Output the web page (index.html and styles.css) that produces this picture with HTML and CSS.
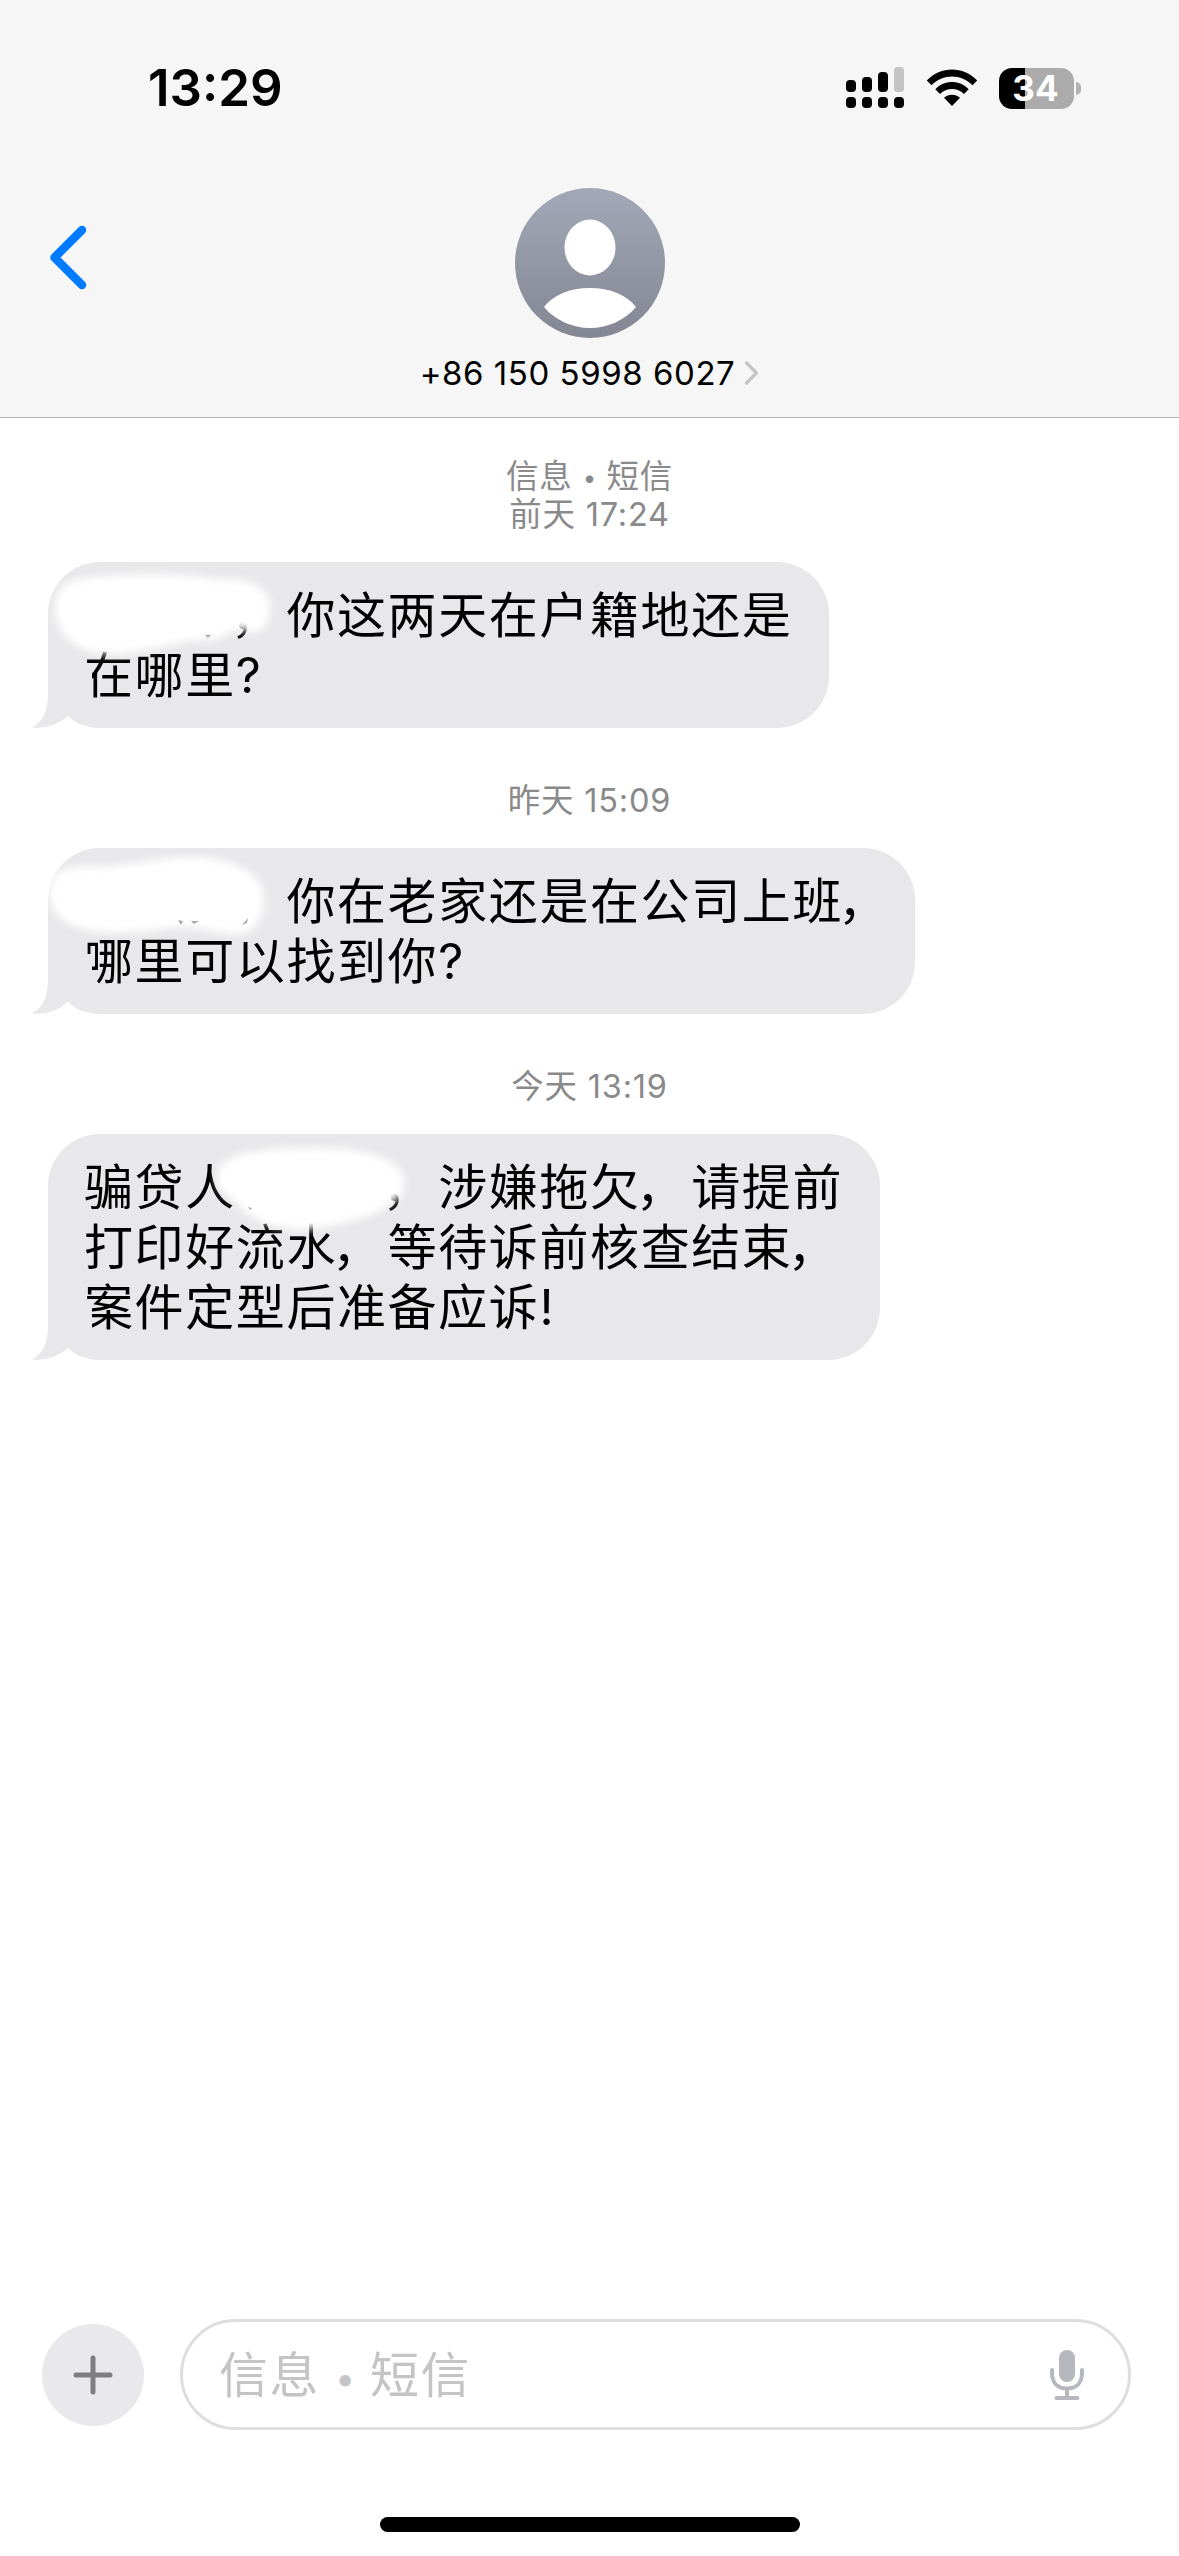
FILE: index.html
```html
<!DOCTYPE html>
<html lang="zh-CN">
<head>
<meta charset="utf-8">
<title>信息</title>
<link rel="stylesheet" href="styles.css">
</head>
<body>
<div class="phone">
  <header class="header">
    <div class="status">
      <span class="clock">13:29</span>
      <div class="indicators">
        <svg class="cellular" width="58" height="42" viewBox="0 0 58 42">
          <rect x="0" y="13" width="10" height="12" rx="4"/>
          <rect x="16" y="10" width="10" height="15" rx="4"/>
          <rect x="32" y="5" width="10" height="20" rx="4"/>
          <rect x="48" y="0" width="10" height="25" rx="3.5" fill="#c4c4c4"/>
          <rect x="0" y="30" width="10" height="11" rx="4"/>
          <rect x="16" y="30" width="10" height="11" rx="4"/>
          <rect x="32" y="30" width="10" height="11" rx="4"/>
          <rect x="48" y="30" width="10" height="11" rx="4"/>
        </svg>
        <svg class="wifi" width="52" height="38" viewBox="0 0 52 38">
          <path d="M0.8 11.5C14.5 -3.2 37.500 -3.200 51.200 11.500L46.500 16.200C35.400 4.600 16.600 4.600 5.500 16.200Z"/>
          <path d="M9.300 20.200C18.500 10.700 33.500 10.700 42.700 20.200L38 24.900C31.500 18.200 20.500 18.200 14 24.900Z"/>
          <path d="M18 28.800C22.400 24.800 29.600 24.800 34 28.800L26 37Z"/>
        </svg>
        <div class="battery">
          <span class="battery-body">34</span>
          <span class="battery-nub"></span>
        </div>
      </div>
    </div>
    <div class="contact-bar">
      <svg class="back" width="44" height="70" viewBox="0 0 44 70">
        <path d="M36 7L8.500 34.500L36 62" fill="none" stroke="#007aff" stroke-width="8.500" stroke-linecap="round" stroke-linejoin="round"/>
      </svg>
      <div class="contact">
        <svg class="avatar" width="150" height="150" viewBox="0 0 150 150">
          <defs>
            <linearGradient id="avatar-fill" x1="0" y1="0" x2="0" y2="1">
              <stop offset="0" stop-color="#a3a8b8"/>
              <stop offset="1" stop-color="#838793"/>
            </linearGradient>
          </defs>
          <circle cx="75" cy="75" r="75" fill="url(#avatar-fill)"/>
          <ellipse cx="75" cy="59.500" rx="25.500" ry="28" fill="#fff"/>
          <path d="M29 119C38 107 55 100 75 100S112 107 121 119C110 132 93 140 75 140S40 132 29 119Z" fill="#fff"/>
        </svg>
        <div class="number">
          <span>+86 150 5998 6027</span>
          <svg width="15" height="26" viewBox="0 0 15 26"><path d="M2.500 3L12.500 13L2.500 23" fill="none" stroke="#c5c5c7" stroke-width="3.200" stroke-linecap="round" stroke-linejoin="round"/></svg>
        </div>
      </div>
    </div>
  </header>

  <main class="thread">
    <div class="stamp first"><b>信息<i class="dot">•</i>短信</b><br><b>前天</b> 17:24</div>
    <div class="bubble b1">
      <svg class="tail" width="60" height="60" viewBox="0 0 60 60"><path d="M16 0V24C16 42 12 53 0 59.500C14 61 28 56 36 48L60 40V0Z" fill="#e8e8ea"/><path d="M36 47.500C42 55 52 59.500 60 60H5C17 59.500 28 56 36 47.500Z" fill="#fff"/></svg>
      <p>　　　<span class="comma">，</span>你这两天在户籍地还是<br>在哪里?</p>
      <svg class="smudge" width="300" height="120" viewBox="0 0 300 120">
        <path d="M7 43C8 22 22 16 48 15C90 11 130 11 166 17C196 15 221 22 222 44C222 60 216 69 206 71L192 67L178 72C174 79 158 77 140 79C110 85 90 92 62 92C30 92 5 72 7 43Z"/>
        <path class="speck" d="M157 73L160 76L163 73Z"/>
      </svg>
    </div>

    <div class="stamp"><b>昨天</b> 15:09</div>
    <div class="bubble b2">
      <svg class="tail" width="60" height="60" viewBox="0 0 60 60"><path d="M16 0V24C16 42 12 53 0 59.500C14 61 28 56 36 48L60 40V0Z" fill="#e8e8ea"/><path d="M36 47.500C42 55 52 59.500 60 60H5C17 59.500 28 56 36 47.500Z" fill="#fff"/></svg>
      <p>　　　<span class="comma">，</span>你在老家还是在公司上班<span class="comma">，</span><br>哪里可以找到你?</p>
      <svg class="smudge" width="300" height="120" viewBox="0 0 300 120">
        <path d="M1 45C1 23 16 18 45 18C80 20 106 9 140 9C178 8 216 22 216 50C216 73 206 85 190 86C170 86 150 79 132 79C105 82 82 86 55 84C22 82 1 68 1 45Z"/>
        <path class="speck" d="M130 72L133 77L135 73ZM143 73L146 76L151 73ZM194 77L200 70L199 75Z"/>
      </svg>
    </div>

    <div class="stamp"><b>今天</b> 13:19</div>
    <div class="bubble b3">
      <svg class="tail" width="60" height="60" viewBox="0 0 60 60"><path d="M16 0V24C16 42 12 53 0 59.500C14 61 28 56 36 48L60 40V0Z" fill="#e8e8ea"/><path d="M36 47.500C42 55 52 59.500 60 60H5C17 59.500 28 56 36 47.500Z" fill="#fff"/></svg>
      <p>骗贷人　　　<span class="comma">，</span>涉嫌拖欠<span class="comma">，</span>请提前<br>打印好流水<span class="comma">，</span>等待诉前核查结束<span class="comma">，</span><br>案件定型后准备应诉!</p>
      <svg class="smudge" width="400" height="120" viewBox="0 0 400 120">
        <path d="M169 44C169 20 205 15 255 14C300 12 356 20 356 48C357 58 352 66 342 69C335 79 310 86 290 90C265 98 232 97 216 88C201 83 195 76 188 68C178 62 169 54 169 44Z"/>
        <path class="speck" d="M200 73L202 76L204 74Z"/>
      </svg>
    </div>
  </main>

  <footer class="composer">
    <div class="plus">
      <svg width="40" height="40" viewBox="0 0 40 40"><path d="M20 3V37M3 20H37" stroke="#7e7e82" stroke-width="5" stroke-linecap="round"/></svg>
    </div>
    <div class="field">
      <span class="placeholder">信息<i class="dot">•</i>短信</span>
      <svg class="mic" width="36" height="52" viewBox="0 0 36 52" fill="none" stroke="#b5b9bd" stroke-linecap="round">
        <rect x="10" y="1" width="16" height="32" rx="8" fill="#b5b9bd" stroke="none"/>
        <path d="M3 21V24C3 34 9 39.500 18 39.500S33 34 33 24V21M18 40V48M7.500 49H28.500" stroke-width="4"/>
      </svg>
    </div>
  </footer>
  <div class="home"></div>
</div>
</body>
</html>
```
FILE: styles.css
```css
* { box-sizing: border-box; }

body {
  margin: 0;
  background: #fff;
  color: #000;
  font-family: Inter, "Noto Sans CJK SC", sans-serif;
}

.phone {
  width: 1179px;
  height: 2556px;
  display: flex;
  flex-direction: column;
  overflow: hidden;
}

svg { display: block; flex: none; }

.header {
  flex: none;
  height: 418px;
  background: #f6f6f6;
  border-bottom: 1px solid #b2b2b3;
}

.status {
  height: 176px;
  padding: 0 98px 0 148px;
  display: flex;
  align-items: center;
  justify-content: space-between;
}

.clock {
  font-size: 51px;
  font-weight: 600;
  line-height: 60px;
}

.indicators { display: flex; align-items: center; }
.wifi { margin: 0 21px 0 22px; }

.battery { display: flex; align-items: center; gap: 2px; }

.battery-body {
  width: 75px;
  height: 41px;
  padding-right: 2px;
  border-radius: 13px;
  background: linear-gradient(90deg, #000 26px, #ababab 26px);
  color: #fff;
  font-size: 35px;
  font-weight: 700;
  line-height: 41px;
  text-align: center;
}

.battery-nub {
  width: 5px;
  height: 13px;
  border-radius: 0 6px 6px 0;
  background: #b2b2b2;
}

.contact-bar {
  display: grid;
  grid-template-columns: 47px 1fr 47px;
  padding-top: 12px;
}

.back { margin: 35px 0 0 46px; }

.contact {
  display: flex;
  flex-direction: column;
  align-items: center;
}

.number {
  display: flex;
  align-items: center;
  gap: 9px;
  margin-top: 15px;
  font-size: 33px;
  line-height: 40px;
  letter-spacing: 0.550px;
  white-space: nowrap;
}

.thread {
  flex: 1;
  display: flex;
  flex-direction: column;
  align-items: flex-start;
  padding: 39px 0 0 48px;
}

.stamp {
  align-self: stretch;
  margin-right: 48px;
  padding: 54px 0 28px;
  color: #8a8a8b;
  font-size: 32.500px;
  line-height: 38px;
  letter-spacing: 0.800px;
  text-align: center;
}

.stamp.first { padding: 1px 0 28px; }
.stamp b { font-weight: 400; }

.dot {
  display: inline-block;
  width: 50px;
  font-size: 36px;
  font-style: normal;
  line-height: 0;
  text-align: center;
  letter-spacing: 0;
  vertical-align: 2px;
}

.stamp .dot { font-size: 24px; width: 34px; }

.bubble {
  position: relative;
  padding: 24px 0 22px 36px;
  border-radius: 52px;
  background: #e8e8ea;
}

.bubble p {
  margin: 0;
  font-size: 49px;
  line-height: 60px;
  letter-spacing: 1.600px;
  white-space: pre;
}

.comma { margin: 0 5px 0 -5px; }

.b1 { width: 781px; }
.b2 { width: 867px; }
.b3 { width: 832px; }

.tail {
  position: absolute;
  left: -16px;
  bottom: 0;
}

.smudge {
  position: absolute;
  left: 0;
  top: 0;
  fill: #fff;
  overflow: visible;
}

.smudge path:first-child { filter: blur(4px); }
.smudge .speck { fill: #aaa; filter: blur(0.5px); }

.composer {
  flex: none;
  display: flex;
  align-items: center;
  gap: 36px;
  height: 111px;
  padding: 0 48px 0 42px;
}

.plus {
  width: 102px;
  height: 102px;
  border-radius: 50%;
  background: #e9e9eb;
  display: flex;
  align-items: center;
  justify-content: center;
}

.field {
  flex: 1;
  height: 111px;
  padding: 0 43px 0 36px;
  border: 3px solid #dedede;
  border-radius: 56px;
  display: flex;
  align-items: center;
  justify-content: space-between;
}

.placeholder {
  padding-top: 3px;
  color: #c4c4c6;
  font-size: 49px;
  line-height: 60px;
  letter-spacing: 1.500px;
}

.home {
  flex: none;
  width: 420px;
  height: 15px;
  margin: 87px auto 24px;
  border-radius: 8px;
  background: #000;
}
```
